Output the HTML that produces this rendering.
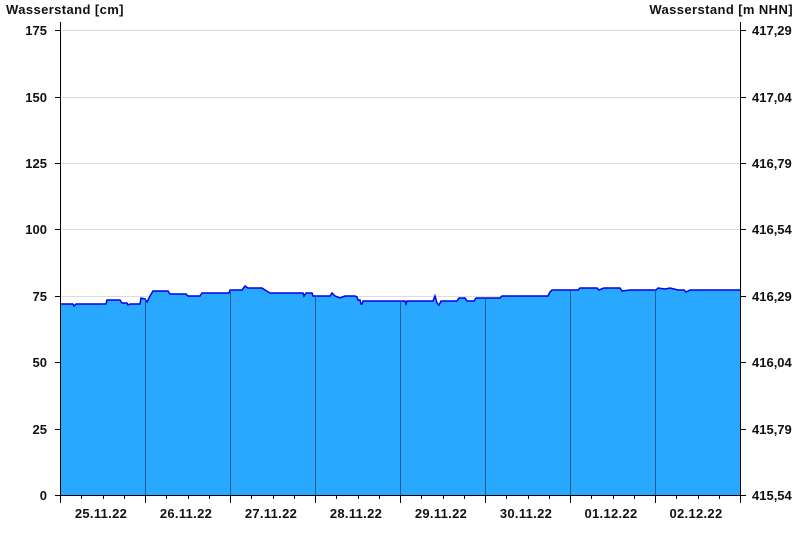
<!DOCTYPE html>
<html><head><meta charset="utf-8"><style>
html,body{margin:0;padding:0;background:#fff;}
svg{display:block;font-family:"Liberation Sans",Arial,sans-serif;font-weight:bold;font-size:13px;}
</style></head><body>
<svg width="800" height="550" viewBox="0 0 800 550">
<text x="6" y="14" fill="#111" letter-spacing="0.4">Wasserstand [cm]</text>
<text x="793" y="14" fill="#111" text-anchor="end" letter-spacing="0.4">Wasserstand [m NHN]</text>
<g stroke="#dcdcdc" stroke-width="1">
<line x1="60" y1="30.5" x2="740" y2="30.5"/><line x1="60" y1="97.5" x2="740" y2="97.5"/>
<line x1="60" y1="163.5" x2="740" y2="163.5"/><line x1="60" y1="229.5" x2="740" y2="229.5"/>
<line x1="60" y1="296.5" x2="740" y2="296.5"/><line x1="60" y1="362.5" x2="740" y2="362.5"/>
<line x1="60" y1="429.5" x2="740" y2="429.5"/>
</g>
<polygon fill="#29a8ff" stroke="none" points="60,495 60,304 73,304 74,306 76,304 106,304 107,300 120,300 122,303 127,303 128,305 130,304 140,304 141,298 145,299 147,302 150,296 153,291 168,291 170,294 186,294 188,296 200,296 202,293 229,293 230,290 242,290 245,286 248,288 262,288 265,290 270,293 303,293 304,296 306,293 312,293 313,296 330,296 332,293 335,296 340,298 345,296 355,296 357,297 358,300 360,300 361,304 362,304 363,301 405,301 406,304 407,301 433,301 435,296 437,303 439,305 441,301 457,301 459,298 465,298 467,301 474,301 476,298 500,298 502,296 548,296 550,292 552,290 578,290 580,288 597,288 599,290 604,288 620,288 622,291 630,290 656,290 658,288 665,289 670,288 678,290 684,290 686,292 690,290 740,290 740,495"/>
<polyline fill="none" stroke="#0000ee" stroke-width="1.5" points="60,304 73,304 74,306 76,304 106,304 107,300 120,300 122,303 127,303 128,305 130,304 140,304 141,298 145,299 147,302 150,296 153,291 168,291 170,294 186,294 188,296 200,296 202,293 229,293 230,290 242,290 245,286 248,288 262,288 265,290 270,293 303,293 304,296 306,293 312,293 313,296 330,296 332,293 335,296 340,298 345,296 355,296 357,297 358,300 360,300 361,304 362,304 363,301 405,301 406,304 407,301 433,301 435,296 437,303 439,305 441,301 457,301 459,298 465,298 467,301 474,301 476,298 500,298 502,296 548,296 550,292 552,290 578,290 580,288 597,288 599,290 604,288 620,288 622,291 630,290 656,290 658,288 665,289 670,288 678,290 684,290 686,292 690,290 740,290"/>
<g stroke="#1f5f8f" stroke-width="1">
<line x1="145.5" y1="298" x2="145.5" y2="495"/><line x1="230.5" y1="290" x2="230.5" y2="495"/>
<line x1="315.5" y1="296" x2="315.5" y2="495"/><line x1="400.5" y1="301" x2="400.5" y2="495"/>
<line x1="485.5" y1="298" x2="485.5" y2="495"/><line x1="570.5" y1="290" x2="570.5" y2="495"/>
<line x1="655.5" y1="290" x2="655.5" y2="495"/>
</g>
<g stroke="#000" stroke-width="1">
<line x1="60.5" y1="22" x2="60.5" y2="496"/><line x1="740.5" y1="22" x2="740.5" y2="496"/>
<line x1="55" y1="495.5" x2="741" y2="495.5"/>
<line x1="55" y1="30.5" x2="60" y2="30.5"/><line x1="55" y1="97.5" x2="60" y2="97.5"/>
<line x1="55" y1="163.5" x2="60" y2="163.5"/><line x1="55" y1="229.5" x2="60" y2="229.5"/>
<line x1="55" y1="296.5" x2="60" y2="296.5"/><line x1="55" y1="362.5" x2="60" y2="362.5"/>
<line x1="55" y1="429.5" x2="60" y2="429.5"/>
<line x1="740" y1="30.5" x2="746" y2="30.5"/><line x1="740" y1="97.5" x2="746" y2="97.5"/>
<line x1="740" y1="163.5" x2="746" y2="163.5"/><line x1="740" y1="229.5" x2="746" y2="229.5"/>
<line x1="740" y1="296.5" x2="746" y2="296.5"/><line x1="740" y1="362.5" x2="746" y2="362.5"/>
<line x1="740" y1="429.5" x2="746" y2="429.5"/><line x1="740" y1="495.5" x2="746" y2="495.5"/>
<line x1="60.5" y1="495" x2="60.5" y2="503"/><line x1="145.5" y1="495" x2="145.5" y2="503"/>
<line x1="230.5" y1="495" x2="230.5" y2="503"/><line x1="315.5" y1="495" x2="315.5" y2="503"/>
<line x1="400.5" y1="495" x2="400.5" y2="503"/><line x1="485.5" y1="495" x2="485.5" y2="503"/>
<line x1="570.5" y1="495" x2="570.5" y2="503"/><line x1="655.5" y1="495" x2="655.5" y2="503"/>
<line x1="740.5" y1="495" x2="740.5" y2="503"/>
</g>
<g stroke="#000" stroke-width="1">
<line x1="81.5" y1="495" x2="81.5" y2="499"/><line x1="103.5" y1="495" x2="103.5" y2="499"/><line x1="124.5" y1="495" x2="124.5" y2="499"/>
<line x1="166.5" y1="495" x2="166.5" y2="499"/><line x1="188.5" y1="495" x2="188.5" y2="499"/><line x1="209.5" y1="495" x2="209.5" y2="499"/>
<line x1="251.5" y1="495" x2="251.5" y2="499"/><line x1="273.5" y1="495" x2="273.5" y2="499"/><line x1="294.5" y1="495" x2="294.5" y2="499"/>
<line x1="336.5" y1="495" x2="336.5" y2="499"/><line x1="358.5" y1="495" x2="358.5" y2="499"/><line x1="379.5" y1="495" x2="379.5" y2="499"/>
<line x1="421.5" y1="495" x2="421.5" y2="499"/><line x1="443.5" y1="495" x2="443.5" y2="499"/><line x1="464.5" y1="495" x2="464.5" y2="499"/>
<line x1="506.5" y1="495" x2="506.5" y2="499"/><line x1="528.5" y1="495" x2="528.5" y2="499"/><line x1="549.5" y1="495" x2="549.5" y2="499"/>
<line x1="591.5" y1="495" x2="591.5" y2="499"/><line x1="613.5" y1="495" x2="613.5" y2="499"/><line x1="634.5" y1="495" x2="634.5" y2="499"/>
<line x1="676.5" y1="495" x2="676.5" y2="499"/><line x1="698.5" y1="495" x2="698.5" y2="499"/><line x1="719.5" y1="495" x2="719.5" y2="499"/>
</g>
<g fill="#111" text-anchor="end">
<text x="47" y="35">175</text><text x="47" y="102">150</text><text x="47" y="168">125</text>
<text x="47" y="234">100</text><text x="47" y="301">75</text><text x="47" y="367">50</text>
<text x="47" y="434">25</text><text x="47" y="500">0</text>
</g>
<g fill="#111">
<text x="752" y="35">417,29</text><text x="752" y="102">417,04</text><text x="752" y="168">416,79</text>
<text x="752" y="234">416,54</text><text x="752" y="301">416,29</text><text x="752" y="367">416,04</text>
<text x="752" y="434">415,79</text><text x="752" y="500">415,54</text>
</g>
<g fill="#111" text-anchor="middle" letter-spacing="0.3">
<text x="101" y="518">25.11.22</text><text x="186" y="518">26.11.22</text><text x="271" y="518">27.11.22</text>
<text x="356" y="518">28.11.22</text><text x="441" y="518">29.11.22</text><text x="526" y="518">30.11.22</text>
<text x="611" y="518">01.12.22</text><text x="696" y="518">02.12.22</text>
</g>
</svg>
</body></html>
